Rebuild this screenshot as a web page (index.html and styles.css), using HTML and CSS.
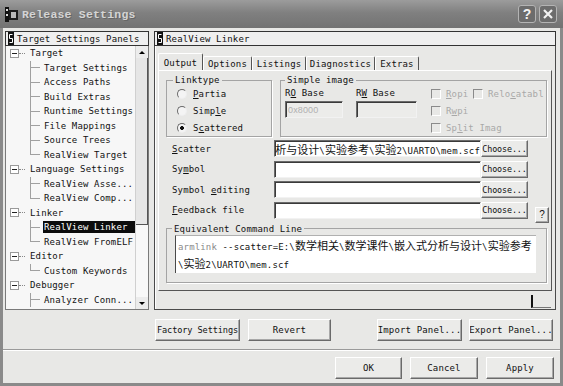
FILE: index.html
```html
<!DOCTYPE html>
<html lang="en">
<head>
  <meta charset="UTF-8">
  <title>Release Settings</title>
  <link rel="stylesheet" href="styles.css">
</head>
<body>
  <div class="window">
    <div class="titlebar">
      <svg class="app-icon" width="13" height="15" viewBox="0 0 13 15">
        <rect x="0" y="0" width="4" height="15" fill="#111"/>
        <rect x="1" y="2" width="2" height="2" fill="#ddd"/>
        <rect x="1" y="7" width="2" height="2" fill="#ddd"/>
        <rect x="4" y="3" width="9" height="10" fill="#1a1a1a"/>
        <rect x="6" y="5" width="5" height="6" fill="#b8b8b8"/>
      </svg>
      <span class="title">Release Settings</span>
      <div class="caption-btns">
        <span class="cap">?</span>
        <span class="cap">
          <svg width="12" height="12" viewBox="0 0 12 12"><path d="M2 2 L10 10 M10 2 L2 10" stroke="#f2f2f2" stroke-width="2.2"/></svg>
        </span>
      </div>
    </div>

    <div class="client">
      <div class="main">
        <div class="left">
          <div class="pane-head">
            <svg width="6" height="13" viewBox="0 0 6 13"><rect width="6" height="13" fill="#111"/><path d="M4.5 2.5 H1.5 V6.5 H4.5 V10.5 H1.5" stroke="#fff" fill="none"/></svg>
            <span>Target Settings Panels</span>
          </div>
          <div class="tree-box">
            <ul class="tree">
              <li class="node"><span class="expander"></span><span class="dash"></span><span class="label">Target</span></li>
              <li class="leaf"><span class="twig"></span><span class="label">Target Settings</span></li>
              <li class="leaf"><span class="twig"></span><span class="label">Access Paths</span></li>
              <li class="leaf"><span class="twig"></span><span class="label">Build Extras</span></li>
              <li class="leaf"><span class="twig"></span><span class="label">Runtime Settings</span></li>
              <li class="leaf"><span class="twig"></span><span class="label">File Mappings</span></li>
              <li class="leaf"><span class="twig"></span><span class="label">Source Trees</span></li>
              <li class="leaf last"><span class="twig"></span><span class="label">RealView Target</span></li>
              <li class="node"><span class="expander"></span><span class="dash"></span><span class="label">Language Settings</span></li>
              <li class="leaf"><span class="twig"></span><span class="label">RealView Asse...</span></li>
              <li class="leaf last"><span class="twig"></span><span class="label">RealView Comp...</span></li>
              <li class="node"><span class="expander"></span><span class="dash"></span><span class="label">Linker</span></li>
              <li class="leaf"><span class="twig"></span><span class="label selected">RealView Linker</span></li>
              <li class="leaf last"><span class="twig"></span><span class="label">RealView FromELF</span></li>
              <li class="node"><span class="expander"></span><span class="dash"></span><span class="label">Editor</span></li>
              <li class="leaf last"><span class="twig"></span><span class="label">Custom Keywords</span></li>
              <li class="node"><span class="expander"></span><span class="dash"></span><span class="label">Debugger</span></li>
              <li class="leaf"><span class="twig"></span><span class="label">Analyzer Conn...</span></li>
            </ul>
            <div class="vscroll">
              <span class="arrow"><span class="tri up"></span></span>
              <span class="thumb"></span>
              <span class="track"></span>
              <span class="arrow"><span class="tri down"></span></span>
            </div>
          </div>
        </div>

        <div class="right">
          <div class="pane-head">
            <svg width="6" height="13" viewBox="0 0 6 13"><rect width="6" height="13" fill="#111"/><path d="M4.5 2.5 H1.5 V6.5 H4.5 V10.5 H1.5" stroke="#fff" fill="none"/></svg>
            <span>RealView Linker</span>
          </div>
          <div class="panel-body">
            <div class="tabs">
              <span class="tab active" style="width:45px">Output</span>
              <span class="tab" style="width:49px">Options</span>
              <span class="tab" style="width:54px">Listings</span>
              <span class="tab" style="width:69px">Diagnostics</span>
              <span class="tab" style="width:44px">Extras</span>
            </div>
            <div class="tab-page">
              <div class="groups">
                <fieldset class="linktype">
                  <legend>Linktype</legend>
                  <div class="opt"><span class="radio"></span><span><u>P</u>artia</span></div>
                  <div class="opt"><span class="radio"></span><span>Simp<u>l</u>e</span></div>
                  <div class="opt"><span class="radio checked"></span><span>S<u>c</u>attered</span></div>
                </fieldset>
                <fieldset class="simple">
                  <legend>Simple image</legend>
                  <div class="image-row">
                    <div class="base ro">
                      <span class="base-label"><span>R<u>O</u> Base</span></span>
                      <span class="input dim">0x8000</span>
                    </div>
                    <div class="base rw">
                      <span class="base-label"><span>R<u>W</u> Base</span></span>
                      <span class="input dim"></span>
                    </div>
                    <div class="checks">
                      <span class="check"><span class="box"></span><span><u>R</u>opi</span></span>
                      <span class="check"><span class="box"></span><span>Relo<u>c</u>atabl</span></span>
                      <span class="check"><span class="box"></span><span>R<u>w</u>pi</span></span>
                      <span></span>
                      <span class="check wide"><span class="box"></span><span>Sp<u>l</u>it Imag</span></span>
                    </div>
                  </div>
                </fieldset>
              </div>

              <div class="fields">
                <span class="field-label"><u>S</u>catter</span>
                <span class="input path"><span><span class="cj">析与设计</span>\<span class="cj">实验参考</span>\<span class="cj">实验</span>2\UARTO\mem.scf</span></span>
                <span class="btn choose"><span>Choose...</span></span>
                <span></span>

                <span class="field-label">Sy<u>m</u>bol</span>
                <span class="input"></span>
                <span class="btn choose"><span>Choose...</span></span>
                <span></span>

                <span class="field-label">Symbol <u>e</u>diting</span>
                <span class="input"></span>
                <span class="btn choose"><span>Choose...</span></span>
                <span></span>

                <span class="field-label"><u>F</u>eedback file</span>
                <span class="input"></span>
                <span class="btn choose"><span>Choose...</span></span>
                <span class="btn help">?</span>
              </div>

              <fieldset class="cmd-group">
                <legend>Equivalent Command Line</legend>
                <div class="cmd">
                  <span class="dimtext">armlink</span> --scatter=E:\<span class="cj">数学相关</span>\<span class="cj">数学课件</span>\<span class="cj">嵌入式分析与设计</span>\<span class="cj">实验参考</span><br>\<span class="cj">实验</span>2\UARTO\mem.scf
                </div>
              </fieldset>
            </div>
            <div class="grip-row"><span class="grip"></span></div>
          </div>
        </div>
      </div>

      <div class="btn-row top">
        <div class="btn-group">
          <span class="btn snug" style="width:85px"><span>Factory Settings</span></span>
          <span class="btn" style="width:83px"><span>Revert</span></span>
        </div>
        <div class="btn-group tight">
          <span class="btn" style="width:85px"><span>Import Panel...</span></span>
          <span class="btn" style="width:84px"><span>Export Panel...</span></span>
        </div>
      </div>
      <div class="sep"></div>
      <div class="btn-row bottom">
        <span class="btn" style="width:67px"><span>OK</span></span>
        <span class="btn" style="width:68px"><span>Cancel</span></span>
        <span class="btn" style="width:68px"><span>Apply</span></span>
      </div>
    </div>
  </div>
</body>
</html>
```

FILE: styles.css
```css
body {
  margin: 0;
  font-family: "DejaVu Sans Mono", "Noto Sans CJK SC", monospace;
  font-size: 9px;
  letter-spacing: 0.15px;
  color: #111;
  background: #8a8a8a;
}
.window {
  width: 563px;
  height: 386px;
  box-sizing: border-box;
  background: #8a8a8a;
  display: flex;
  flex-direction: column;
}
.titlebar {
  height: 28px;
  flex: none;
  display: flex;
  align-items: center;
  padding: 0 6px 0 5px;
  background: linear-gradient(#9c9c9c, #808080 45%, #727272);
}
.app-icon { margin-right: 4px; }
.title {
  font-family: "Liberation Mono", monospace;
  font-weight: bold;
  font-size: 11.5px;
  letter-spacing: 0.2px;
  color: #d4d4d4;
  text-shadow: 1px 1px 0 #666;
}
.caption-btns {
  margin-left: auto;
  display: flex;
  gap: 3px;
}
.cap {
  width: 18px;
  height: 18px;
  box-sizing: border-box;
  border: 1px solid #b4b4b4;
  border-radius: 3px;
  background: #6c6c6c;
  color: #f2f2f2;
  font-family: "Liberation Sans", sans-serif;
  font-weight: bold;
  font-size: 14px;
  display: flex;
  align-items: center;
  justify-content: center;
}
.client {
  flex: 1;
  margin: 0 3px 3px;
  background: #e8e8e6;
  padding: 3px 4px 0 2px;
  display: flex;
  flex-direction: column;
}
.main {
  height: 279px;
  display: flex;
  gap: 5px;
}
.left {
  width: 144px;
  display: flex;
  flex-direction: column;
}
.right {
  width: 402px;
  display: flex;
  flex-direction: column;
}
.pane-head {
  height: 15px;
  flex: none;
  box-sizing: border-box;
  border: 1px solid #333;
  background: #efefef;
  display: flex;
  align-items: center;
  gap: 3px;
  padding-left: 2px;
  white-space: nowrap;
}

/* tree */
.tree-box {
  flex: 1;
  display: flex;
  border: 1px solid #7a7a7a;
  border-top: none;
  background: #f7f7f7;
  overflow: hidden;
}
.tree {
  flex: 1;
  list-style: none;
  margin: 0;
  padding: 0;
}
.tree li {
  height: 14.5px;
  display: flex;
  align-items: center;
  white-space: nowrap;
}
.node { padding-left: 4px; }
.expander {
  width: 9px;
  height: 9px;
  box-sizing: border-box;
  border: 1px solid #9a9a9a;
  background: linear-gradient(#222, #222) center / 5px 1px no-repeat, #fff;
}
.dash {
  width: 6px;
  border-top: 1px dotted #888;
  margin-right: 4px;
}
.leaf { padding-left: 24px; }
.twig {
  width: 10px;
  align-self: stretch;
  margin-right: 3px;
  background:
    linear-gradient(#a0a0a0, #a0a0a0) left top / 1px 100% no-repeat,
    linear-gradient(#a0a0a0, #a0a0a0) left center / 100% 1px no-repeat;
}
.leaf.last .twig {
  background:
    linear-gradient(#a0a0a0, #a0a0a0) left top / 1px 50% no-repeat,
    linear-gradient(#a0a0a0, #a0a0a0) left center / 100% 1px no-repeat;
}
.label {
  line-height: 12px;
  padding-left: 1px;
}
.label.selected {
  flex: 1;
  background: #0c0c0c;
  color: #fff;
}
.vscroll {
  width: 12px;
  display: flex;
  flex-direction: column;
  background: #f0f0f0;
  border-left: 1px solid #d0d0d0;
}
.arrow {
  height: 12px;
  display: flex;
  align-items: center;
  justify-content: center;
  background: #ececec;
}
.tri {
  width: 0;
  height: 0;
  border-left: 3px solid transparent;
  border-right: 3px solid transparent;
}
.tri.up { border-bottom: 3px solid #000; }
.tri.down { border-top: 3px solid #000; }
.thumb {
  height: 166px;
  background: #e6e6e6;
  border-right: 1px solid #555;
  border-bottom: 1px solid #555;
}
.track {
  flex: 1;
  background: #f8f8f8;
}

/* right panel */
.panel-body {
  flex: 1;
  border: 1px solid #4a4a4a;
  border-top: none;
  box-shadow: inset 1px 0 0 #fff;
  padding: 7px 3px 0;
  display: flex;
  flex-direction: column;
}
.tabs {
  height: 17px;
  display: flex;
  align-items: flex-end;
}
.tab {
  height: 14px;
  box-sizing: border-box;
  border: 1px solid;
  border-color: #fff #555 transparent #fff;
  border-bottom: none;
  border-radius: 2px 2px 0 0;
  display: flex;
  align-items: center;
  justify-content: center;
  white-space: nowrap;
}
.tab.active {
  height: 18px;
  margin-bottom: -1px;
  background: #e8e8e6;
}
.tab-page {
  height: 221px;
  box-sizing: border-box;
  border: 1px solid;
  border-color: #fff #555 #555 #fff;
}
.groups {
  display: flex;
  gap: 8px;
  margin-top: 4px;
  padding: 0 4px 0 7px;
}
fieldset {
  margin: 0;
  min-inline-size: 0;
  border: 1px solid #a4a4a4;
  box-shadow: 1px 1px 0 #fff;
  padding: 0 0 0 6px;
}
legend {
  padding: 0 2px;
  line-height: 10px;
}
.linktype { width: 106px; box-sizing: border-box; }
.simple {
  flex: 1;
  padding-left: 4px;
  overflow: hidden;
}
.opt {
  height: 17px;
  display: flex;
  align-items: center;
  gap: 6px;
  padding-left: 4px;
}
.radio {
  width: 10px;
  height: 10px;
  box-sizing: border-box;
  border-radius: 50%;
  border: 1px solid;
  border-color: #6a6a6a #eee #eee #6a6a6a;
  background: #f4f4f4;
}
.radio.checked {
  background: radial-gradient(circle, #111 0 1.6px, #f4f4f4 2.2px);
}
.image-row {
  display: flex;
  height: 51px;
}
.base {
  display: flex;
  flex-direction: column;
}
.ro { width: 58px; margin-right: 13px; }
.rw { width: 61px; margin-right: 14px; }
.base-label {
  height: 16px;
  display: flex;
  align-items: center;
  white-space: nowrap;
}
.input {
  height: 17px;
  box-sizing: border-box;
  background: #fff;
  border: 1px solid;
  border-color: #6a6a6a #f2f2f2 #f2f2f2 #6a6a6a;
  box-shadow: inset 1px 1px 0 #3a3a3a;
  display: flex;
  align-items: center;
  white-space: nowrap;
  overflow: hidden;
}
.input.dim {
  background: #ececea;
  color: #b0b0b0;
  font-family: "Liberation Sans", sans-serif;
  padding-left: 2px;
}
.checks {
  display: grid;
  grid-template-columns: 42px auto;
  grid-auto-rows: 17px;
  color: #a8a8a8;
}
.check {
  display: flex;
  align-items: center;
  gap: 5px;
  white-space: nowrap;
}
.check.wide { grid-column: span 2; }
.box {
  width: 10px;
  height: 10px;
  box-sizing: border-box;
  border: 1px solid;
  border-color: #8a8a8a #fff #fff #8a8a8a;
}
.fields {
  display: grid;
  grid-template-columns: 102px 207px 47px 21px;
  grid-auto-rows: 17px;
  row-gap: 3.5px;
  align-items: center;
  margin-top: 3px;
  padding-left: 13px;
}
.fields .input { width: 207px; }
.input.path {
  justify-content: flex-end;
  padding-left: 2px;
}
.cj {
  font-family: "Noto Sans CJK SC", sans-serif;
  font-size: 11px;
  letter-spacing: 0;
}
.btn {
  height: 22px;
  box-sizing: border-box;
  background: #ebebe9;
  border: 1px solid;
  border-color: #fff #6a6a6a #6a6a6a #fff;
  box-shadow: inset -1px -1px 0 #a8a8a8;
  display: flex;
  align-items: center;
  justify-content: center;
  overflow: hidden;
  white-space: nowrap;
}
.btn.snug {
  font-size: 8.6px;
  letter-spacing: -0.1px;
}
.btn.choose {
  width: 47px;
  height: 17px;
  font-size: 8.4px;
  letter-spacing: -0.1px;
}
.btn.help {
  width: 14px;
  height: 16px;
  margin-left: 7px;
  align-self: end;
  margin-bottom: -4px;
  font-family: "Liberation Sans", sans-serif;
  font-size: 10px;
}
.cmd-group {
  margin: 5px 4px 0 7px;
  padding: 1px 10px 9px 5px;
}
.cmd {
  height: 38px;
  margin-left: 3px;
  box-sizing: border-box;
  background: #fff;
  border-left: 1px solid #4a4a4a;
  border-top: 1px solid #b0b0b0;
  padding: 1px 2px;
  line-height: 16px;
  white-space: nowrap;
  overflow: hidden;
}
.dimtext { color: #8a8a8a; }
.grip-row {
  height: 17px;
  display: flex;
  align-items: flex-end;
}
.grip {
  width: 18px;
  height: 12px;
  margin-left: auto;
  margin-right: 1px;
  border-left: 2px solid #111;
  border-bottom: 1px solid #777;
}

/* bottom buttons */
.btn-row {
  display: flex;
  flex: none;
}
.btn-row.top {
  margin-top: 9px;
  justify-content: space-between;
  padding: 0 3px 0 150px;
}
.btn-group {
  display: flex;
  gap: 8px;
}
.btn-group.tight { gap: 7px; }
.sep {
  height: 0;
  margin: 8px -4px 0 -2px;
  border-top: 1px solid #9a9a9a;
  border-bottom: 1px solid #fff;
}
.btn-row.bottom {
  margin-top: 6px;
  justify-content: flex-end;
  gap: 8px;
  padding-right: 2px;
}
```
